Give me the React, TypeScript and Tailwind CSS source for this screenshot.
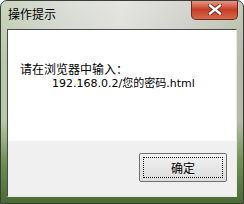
import React from "react";

export default function App() {
  return (
    <div
      className="relative w-[244px] h-[204px] overflow-hidden rounded-t-[7px] border border-[#3c3c3c] flex flex-col"
      style={{
        background:
          "linear-gradient(180deg, rgba(255,255,255,0.25) 0%, rgba(255,255,255,0) 30%), linear-gradient(90deg, #b9c7a9 0%, #cfd3cb 25%, #dcdcd8 50%, #c9cbc3 75%, #b3b9a3 100%)",
      }}
    >
      <div className="absolute left-0 right-0 top-[120px] bottom-0 bg-gradient-to-b from-transparent via-[#6f9050] to-[#4a6a34]" />
      <div className="relative h-[28px] flex items-start pl-[7px] pt-[6px] text-[12px] leading-[14px] text-black [font-family:'Noto_Sans_CJK_SC',sans-serif]">
        操作提示
      </div>
      <div className="absolute top-[-1px] left-[190px] w-[47px] h-[20px] rounded-b-[5px] border border-[#6b2a22] border-t-0 bg-gradient-to-b from-[#e8a090] via-[#c83c24] to-[#d66a4c] flex items-center justify-center">
        <svg width="14" height="11" viewBox="0 0 14 11">
          <path d="M2 1.5 L12 9.5 M12 1.5 L2 9.5" stroke="#5a2015" strokeWidth="4" strokeLinecap="square" />
          <path d="M2 1.5 L12 9.5 M12 1.5 L2 9.5" stroke="#ffffff" strokeWidth="2.4" strokeLinecap="square" />
        </svg>
      </div>
      <div className="relative mx-[6px] h-[168px] border border-[#4a4a4a] border-r-[#e8e8e8] border-b-[#e8e8e8] flex flex-col">
        <div className="h-[111px] bg-white pl-[12px] pt-[31px] text-[12px] leading-[15px] text-black [font-family:'Noto_Sans_CJK_SC',sans-serif]">
          <div>请在浏览器中输入：</div>
          <div className="pl-[32px] [font-family:'DejaVu_Sans','Noto_Sans_CJK_SC',sans-serif] text-[11px]">192.168.0.2/您的密码.html</div>
        </div>
        <div className="flex-1 bg-[#f0f0f0] flex justify-end items-start pt-[12px] pr-[9px]">
          <div className="w-[88px] h-[29px] border border-[#707070] rounded-[2px] bg-gradient-to-b from-[#f2f2f2] to-[#dcdcdc] p-[3px]">
            <div className="w-full h-full border border-dotted border-black flex items-center justify-center text-[12px] text-black [font-family:'Noto_Sans_CJK_SC',sans-serif]">
              确定
            </div>
          </div>
        </div>
      </div>
    </div>
  );
}
